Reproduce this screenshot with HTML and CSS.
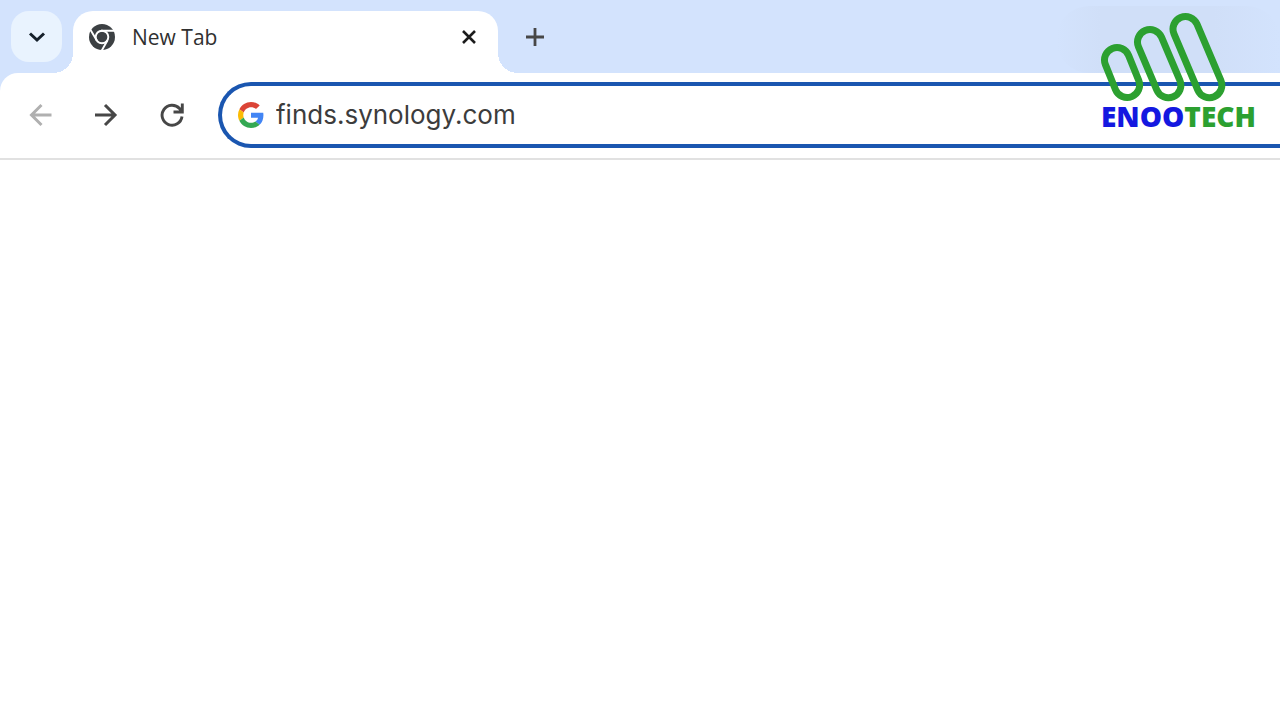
FILE: index.html
```html
<!DOCTYPE html>
<html lang="en">
<head>
    <meta charset="UTF-8">
    <meta name="viewport" content="width=device-width, initial-scale=1.0">
    <title>New Tab</title>
    <link rel="stylesheet" href="styles.css">
</head>
<body>
    <header class="browser">
        <!-- Tab strip -->
        <div class="tab-strip">
            <button class="tab-search" type="button" aria-label="Search tabs">
                <svg width="18" height="12" viewBox="0 0 18 12"><path d="M2 2.500 9 9l7-6.500" fill="none" stroke="#15202b" stroke-width="3"/></svg>
            </button>
            <div class="tab">
                <svg class="favicon" width="28" height="28" viewBox="0 0 28 28">
                    <circle cx="14" cy="14" r="13" fill="#3c4043"/>
                    <circle cx="14" cy="14" r="6.300" fill="none" stroke="#fff" stroke-width="1.900"/>
                    <path d="M13 7.700H26M8.800 17.500 2.300 6.500M19.400 17.500 13.500 28" fill="none" stroke="#fff" stroke-width="1.900"/>
                </svg>
                <span class="tab-title">New Tab</span>
                <button class="tab-close" type="button" aria-label="Close tab">
                    <svg width="16" height="16" viewBox="0 0 16 16"><path d="M2 2l12 12M14 2 2 14" fill="none" stroke="#1c1c1c" stroke-width="2.600"/></svg>
                </button>
            </div>
            <button class="new-tab" type="button" aria-label="New tab">
                <svg width="20" height="20" viewBox="0 0 20 20"><path d="M10 1v18M1 10h18" fill="none" stroke="#474747" stroke-width="2.800"/></svg>
            </button>
            <div class="window-area"></div>
        </div>

        <!-- Toolbar -->
        <div class="toolbar">
            <button class="nav-btn back" type="button" aria-label="Back" disabled>
                <svg width="24" height="24" viewBox="0 0 24 24"><path d="M23.500 12H3.500M13.500 2 3.500 12l10 10" fill="none" stroke="currentColor" stroke-width="3"/></svg>
            </button>
            <button class="nav-btn" type="button" aria-label="Forward">
                <svg width="24" height="24" viewBox="0 0 24 24"><path d="M1 12h20M11 2l10 10-10 10" fill="none" stroke="currentColor" stroke-width="3"/></svg>
            </button>
            <button class="nav-btn" type="button" aria-label="Reload">
                <svg width="24" height="24" viewBox="0 0 24 24"><path d="M22 13.500A10 10 0 1 1 19.500 5.500L21.500 8M22.300 .5v8.500h-8.800" fill="none" stroke="currentColor" stroke-width="2.900"/></svg>
            </button>
            <label class="address-bar">
                <svg width="26" height="26" viewBox="0 0 48 48" aria-hidden="true">
                    <path fill="#db4437" d="M24 9.500c3.540 0 6.710 1.220 9.210 3.600l6.850-6.850C35.900 2.380 30.470 0 24 0 14.620 0 6.510 5.380 2.560 13.220l7.980 6.190C12.430 13.720 17.740 9.500 24 9.500z"/>
                    <path fill="#4285f4" d="M46.980 24.550c0-1.570-.15-3.090-.38-4.550H24v9.020h12.940c-.58 2.960-2.260 5.480-4.780 7.180l7.730 6c4.510-4.180 7.090-10.360 7.090-17.650z"/>
                    <path fill="#fbbc05" d="M10.530 28.590A14.500 14.500 0 0 1 9.770 24c0-1.600.27-3.140.76-4.590l-7.980-6.190A24 24 0 0 0 0 24c0 3.880.92 7.540 2.560 10.780z"/>
                    <path fill="#34a853" d="M24 48c6.480 0 11.930-2.130 15.890-5.810l-7.730-6c-2.150 1.450-4.920 2.300-8.160 2.300-6.260 0-11.570-4.220-13.470-9.910l-7.980 6.190C6.510 42.620 14.620 48 24 48z"/>
                </svg>
                <input type="text" value="finds.synology.com" aria-label="Address" spellcheck="false">
            </label>
        </div>
    </header>

    <main class="page"></main>

    <!-- Channel watermark -->
    <div class="watermark">
        <svg width="154" height="92" viewBox="0 0 154 92">
            <g fill="none" stroke="#2ca030" stroke-width="7">
                <rect x="-12.500" y="-12.500" width="25" height="52" rx="12.500" transform="translate(17 50) rotate(-22)"/>
                <rect x="-12.500" y="-12.500" width="25" height="72" rx="12.500" transform="translate(50 32) rotate(-23)"/>
                <rect x="-12.500" y="-12.500" width="25" height="86" rx="12.500" transform="translate(85.500 19) rotate(-23)"/>
            </g>
        </svg>
        <div class="brand"><span class="brand-first">ENOO</span><span class="brand-last">TECH</span></div>
    </div>
</body>
</html>
```

FILE: styles.css
```css
* {
    box-sizing: border-box;
}

body {
    margin: 0;
    min-height: 100vh;
    background: #fff;
    font-family: "Open Sans", "Noto Sans", sans-serif;
    overflow-x: hidden;
}

button {
    display: flex;
    align-items: center;
    justify-content: center;
    padding: 0;
    border: none;
    background: none;
    cursor: pointer;
}

.browser {
    background: #d3e3fd;
}

.tab-strip {
    display: flex;
    height: 73px;
    padding-left: 11px;
}

.tab-search {
    width: 51px;
    height: 51px;
    margin-top: 11px;
    border-radius: 18px;
    background: #e9f3fe;
}

.tab {
    position: relative;
    display: flex;
    align-items: center;
    width: 425px;
    margin-top: 11px;
    margin-left: 11px;
    padding: 0 21px 10px 15px;
    border-radius: 20px 20px 0 0;
    background: #fff;
}

/* curved feet of the active tab */
.tab::before,
.tab::after {
    content: "";
    position: absolute;
    bottom: 0;
    width: 20px;
    height: 20px;
}

.tab::before {
    right: 100%;
    background: radial-gradient(circle at 0 0, transparent 20px, #fff 20px);
}

.tab::after {
    left: 100%;
    background: radial-gradient(circle at 100% 0, transparent 20px, #fff 20px);
}

.tab-title {
    flex: 1;
    margin-left: 16px;
    font-size: 21px;
    line-height: 28px;
    color: #303030;
}

.new-tab {
    width: 40px;
    height: 51px;
    margin-top: 11px;
    margin-left: 17px;
}

.window-area {
    width: 224px;
    margin-top: 6px;
    margin-left: auto;
    border-radius: 40px 40px 0 40px;
    background: linear-gradient(to right, #d3e3fd, #d0dff8 20%, #d0dff8 70%, #d3e3fd);
}

.toolbar {
    display: flex;
    align-items: center;
    height: 87px;
    padding-left: 28px;
    padding-bottom: 2px;
    border-bottom: 2px solid #e1e1e1;
    border-radius: 18px 0 0 0;
    background: #fff;
}

.nav-btn {
    width: 24px;
    height: 24px;
    margin-right: 42px;
    color: #474747;
}

.nav-btn.back {
    color: #b0b0b0;
}

.address-bar {
    display: flex;
    flex: 1;
    align-items: center;
    height: 66px;
    margin-left: -8px;
    padding-left: 16px;
    border: 4px solid #1a56b0;
    border-right: none;
    border-radius: 33px 0 0 33px;
}

.address-bar input {
    flex: 1;
    min-width: 0;
    margin-left: 12px;
    padding: 0;
    border: none;
    outline: none;
    background: none;
    font-family: Inter, sans-serif;
    font-size: 26px;
    line-height: 32px;
    color: #3c3c3c;
}

.watermark {
    position: absolute;
    top: 10px;
    right: 25px;
    width: 155px;
}

.watermark svg {
    display: block;
}

.brand {
    display: flex;
    padding-left: 1px;
    font-size: 28px;
    font-weight: 800;
    line-height: 28px;
}

.brand-first {
    color: #1418e0;
}

.brand-last {
    color: #2ca030;
}
```
